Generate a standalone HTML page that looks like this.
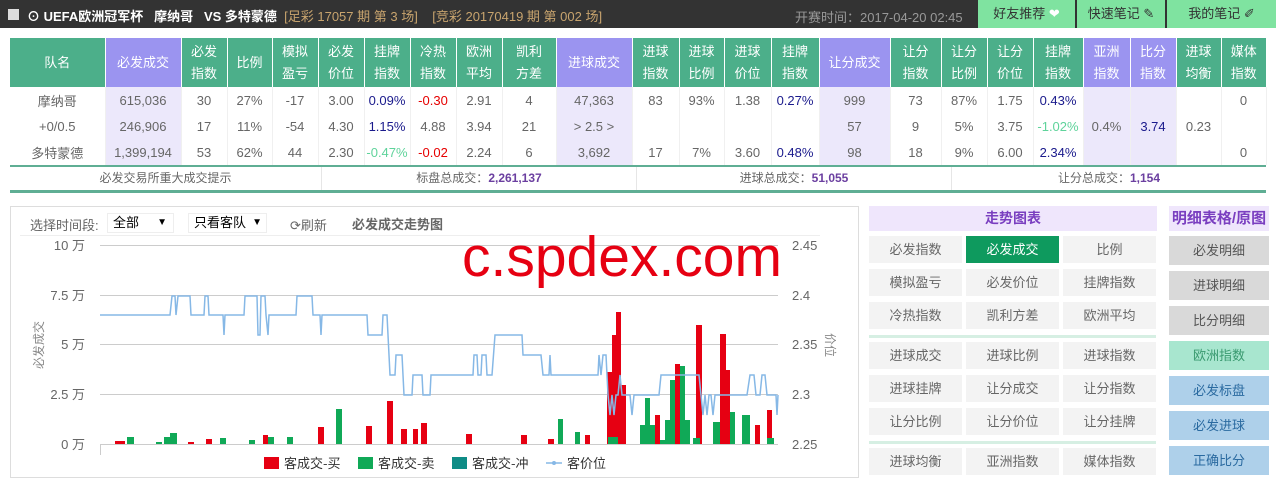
<!DOCTYPE html>
<html><head><meta charset="utf-8"><style>
*{margin:0;padding:0;box-sizing:border-box}
body{width:1276px;height:482px;background:#fff;font-family:"Liberation Sans","Noto Sans CJK SC",sans-serif;font-size:13px;color:#666;position:relative;overflow:hidden}
.abs{position:absolute}
#top{left:0;top:0;width:1276px;height:28px;background:#333}
#top .t{left:27px;top:6px;color:#fff;font-weight:bold;font-size:13px;white-space:nowrap}
#top .t span{color:#c8a46e;font-weight:normal}
.tb{top:0;height:28px;background:#7fe3a0;color:#333;text-align:center;line-height:28px;font-size:13px}
table{border-collapse:collapse;table-layout:fixed}
#tbl{position:absolute;left:10px;top:38px;width:1256px}
#tbl th{background:#4caf8a;color:#fff;font-weight:normal;height:49px;border-right:1px solid #fff;line-height:22px;font-size:13px}
#tbl th.p{background:#9b94f0}
#tbl td{height:26px;text-align:center;border-right:1px solid #f0f0f0;font-size:13px;color:#666}
#tbl td.p{background:#ece8fb}
.b{color:#1a1a8c!important}.r{color:#e60000!important}.g{color:#5fd39b!important}
#sum{left:10px;top:165px;width:1256px;height:28px;border-top:2px solid #5fae94;border-bottom:3px solid #5fae94}
#sum div{position:absolute;top:0;height:23px;line-height:23px;text-align:center;border-right:1px solid #e6e6e6;font-size:12px}
#sum b{color:#6b3fa0}
#chart{left:10px;top:206px;width:849px;height:272px;border:1px solid #ddd}
.hd{background:#efe6fc;color:#7a3fc0;font-weight:bold;text-align:center;font-size:14px}
.bt{position:absolute;width:93px;height:27px;background:#f3f3f3;color:#666;text-align:center;line-height:27px;font-size:13px}
.rb{position:absolute;left:1169px;width:100px;height:29px;text-align:center;line-height:29px;font-size:13px}
.sep{position:absolute;left:869px;width:287px;height:3px;background:#d6efe3}
</style></head><body>
<div id="top" class="abs">
<div class="abs" style="left:8px;top:9px;width:11px;height:11px;background:#ddd"></div>
<div class="abs t">⊙ UEFA欧洲冠军杯&nbsp;&nbsp; 摩纳哥&nbsp;&nbsp; VS 多特蒙德&nbsp; <span>[足彩 17057 期 第 3 场]&nbsp;&nbsp;&nbsp; [竞彩 20170419 期 第 002 场]</span></div>
<div class="abs" style="left:795px;top:7px;color:#999;font-size:13px">开赛时间：2017-04-20 02:45</div>
</div>
<div class="abs tb" style="left:978px;width:97px">好友推荐 <span style="color:#fff">❤</span></div>
<div class="abs tb" style="left:1077px;width:88px">快速笔记 ✎</div>
<div class="abs tb" style="left:1167px;width:109px">我的笔记 ✐</div>

<table id="tbl">
<colgroup><col style="width:95px"><col style="width:76px"><col style="width:46px"><col style="width:45px"><col style="width:46px"><col style="width:46px"><col style="width:46px"><col style="width:46px"><col style="width:46px"><col style="width:54px"><col style="width:76px"><col style="width:47px"><col style="width:45px"><col style="width:47px"><col style="width:48px"><col style="width:71px"><col style="width:51px"><col style="width:46px"><col style="width:46px"><col style="width:50px"><col style="width:47px"><col style="width:46px"><col style="width:45px"><col style="width:45px"></colgroup>
<tr><th>队名</th><th class="p">必发成交</th><th>必发<br>指数</th><th>比例</th><th>模拟<br>盈亏</th><th>必发<br>价位</th><th>挂牌<br>指数</th><th>冷热<br>指数</th><th>欧洲<br>平均</th><th>凯利<br>方差</th><th class="p">进球成交</th><th>进球<br>指数</th><th>进球<br>比例</th><th>进球<br>价位</th><th>挂牌<br>指数</th><th class="p">让分成交</th><th>让分<br>指数</th><th>让分<br>比例</th><th>让分<br>价位</th><th>挂牌<br>指数</th><th class="p">亚洲<br>指数</th><th class="p">比分<br>指数</th><th>进球<br>均衡</th><th style="border-right:0">媒体<br>指数</th></tr>
<tr><td>摩纳哥</td><td class="p">615,036</td><td>30</td><td>27%</td><td>-17</td><td>3.00</td><td class="b">0.09%</td><td class="r">-0.30</td><td>2.91</td><td>4</td><td class="p">47,363</td><td>83</td><td>93%</td><td>1.38</td><td class="b">0.27%</td><td class="p">999</td><td>73</td><td>87%</td><td>1.75</td><td class="b">0.43%</td><td class="p"></td><td class="p"></td><td></td><td>0</td></tr>
<tr><td>+0/0.5</td><td class="p">246,906</td><td>17</td><td>11%</td><td>-54</td><td>4.30</td><td class="b">1.15%</td><td>4.88</td><td>3.94</td><td>21</td><td class="p">&gt; 2.5 &gt;</td><td></td><td></td><td></td><td></td><td class="p">57</td><td>9</td><td>5%</td><td>3.75</td><td class="g">-1.02%</td><td class="p">0.4%</td><td class="p b">3.74</td><td>0.23</td><td></td></tr>
<tr><td>多特蒙德</td><td class="p">1,399,194</td><td>53</td><td>62%</td><td>44</td><td>2.30</td><td class="g">-0.47%</td><td class="r">-0.02</td><td>2.24</td><td>6</td><td class="p">3,692</td><td>17</td><td>7%</td><td>3.60</td><td class="b">0.48%</td><td class="p">98</td><td>18</td><td>9%</td><td>6.00</td><td class="b">2.34%</td><td class="p"></td><td class="p"></td><td></td><td>0</td></tr>
</table>
<div id="sum" class="abs">
<div style="left:0;width:312px">必发交易所重大成交提示</div>
<div style="left:312px;width:315px">标盘总成交：<b>2,261,137</b></div>
<div style="left:627px;width:315px">进球总成交：<b>51,055</b></div>
<div style="left:942px;width:314px;border-right:0">让分总成交：<b>1,154</b></div>
</div>

<div id="chart" class="abs"></div>
<div class="abs" style="left:30px;top:215px;font-size:13px;color:#666">选择时间段:</div>
<div class="abs" style="left:107px;top:213px;width:67px;height:20px;border:1px solid #eee;color:#000;font-size:13px;line-height:18px;padding-left:5px">全部<span style="position:absolute;right:6px;font-size:10px">▼</span></div>
<div class="abs" style="left:188px;top:213px;width:79px;height:20px;border:1px solid #eee;color:#000;font-size:13px;line-height:18px;padding-left:5px">只看客队<span style="position:absolute;right:4px;font-size:10px">▼</span></div>
<div class="abs" style="left:290px;top:215px;color:#666;font-size:13px">⟳刷新</div>
<div class="abs" style="left:352px;top:214px;color:#666;font-size:13px;font-weight:bold">必发成交走势图</div>
<div class="abs" style="left:20px;top:235px;width:800px;height:1px;background:#eee"></div>

<svg class="abs" style="left:0;top:0" width="860" height="482">
<g stroke="#ccc" stroke-width="1">
<line x1="100" y1="245.5" x2="778" y2="245.5"/><line x1="100" y1="295.5" x2="778" y2="295.5"/><line x1="100" y1="344.5" x2="778" y2="344.5"/><line x1="100" y1="394.5" x2="778" y2="394.5"/><line x1="100" y1="444.5" x2="778" y2="444.5"/><line x1="100.5" y1="444" x2="100.5" y2="455"/>
</g>
<g font-size="13" fill="#666" font-family="Liberation Sans,Noto Sans CJK SC,sans-serif" text-anchor="end">
<text x="85" y="250">10 万</text><text x="85" y="300">7.5 万</text><text x="85" y="349">5 万</text><text x="85" y="399">2.5 万</text><text x="85" y="449">0 万</text>
</g>
<g font-size="13" fill="#666" font-family="Liberation Sans,sans-serif">
<text x="792" y="250">2.45</text><text x="792" y="300">2.4</text><text x="792" y="349">2.35</text><text x="792" y="399">2.3</text><text x="792" y="449">2.25</text>
</g>
<text transform="translate(43,345) rotate(-90)" text-anchor="middle" font-size="12" fill="#888" font-family="Noto Sans CJK SC,sans-serif">必发成交</text>
<text transform="translate(826,345) rotate(90)" text-anchor="middle" font-size="12" fill="#888" font-family="Noto Sans CJK SC,sans-serif">价位</text>
<g fill="#e60012">
<rect x="115" y="441" width="10" height="3"/><rect x="188" y="442" width="6" height="2"/><rect x="206" y="439" width="6" height="5"/><rect x="263" y="435" width="5" height="9"/><rect x="318" y="427" width="6" height="17"/><rect x="366" y="426" width="6" height="18"/><rect x="387" y="401" width="6" height="43"/><rect x="401" y="429" width="6" height="15"/><rect x="413" y="429" width="5" height="15"/><rect x="421" y="423" width="6" height="21"/>
<rect x="466" y="434" width="6" height="10"/><rect x="521" y="435" width="6" height="9"/><rect x="548" y="439" width="6" height="5"/><rect x="585" y="435" width="5" height="9"/><rect x="607" y="372" width="5" height="72"/><rect x="612" y="335" width="4" height="109"/><rect x="616" y="312" width="5" height="132"/><rect x="621" y="385" width="5" height="59"/><rect x="655" y="415" width="5" height="29"/><rect x="675" y="364" width="5" height="80"/><rect x="696" y="325" width="6" height="119"/><rect x="720" y="334" width="6" height="110"/><rect x="726" y="370" width="4" height="74"/><rect x="755" y="425" width="5" height="19"/><rect x="767" y="410" width="5" height="34"/>
</g>
<g fill="#10a957">
<rect x="127" y="437" width="7" height="7"/><rect x="156" y="442" width="6" height="2"/><rect x="164" y="437" width="6" height="7"/><rect x="170" y="433" width="7" height="11"/><rect x="220" y="438" width="6" height="6"/><rect x="249" y="440" width="6" height="4"/><rect x="268" y="437" width="6" height="7"/><rect x="287" y="437" width="6" height="7"/><rect x="336" y="409" width="6" height="35"/>
<rect x="558" y="419" width="5" height="25"/><rect x="575" y="432" width="5" height="12"/><rect x="608" y="437" width="10" height="7"/><rect x="640" y="425" width="5" height="19"/><rect x="645" y="398" width="5" height="46"/><rect x="650" y="425" width="5" height="19"/><rect x="660" y="440" width="5" height="4"/><rect x="665" y="420" width="5" height="24"/><rect x="670" y="380" width="5" height="64"/><rect x="680" y="366" width="5" height="78"/><rect x="685" y="420" width="5" height="24"/><rect x="693" y="438" width="7" height="6"/><rect x="713" y="422" width="7" height="22"/><rect x="730" y="412" width="5" height="32"/><rect x="742" y="415" width="8" height="29"/><rect x="767" y="438" width="7" height="6"/>
</g>
<polyline fill="none" stroke="#86b8e6" stroke-width="1.5" points="100,315 170,315 172,296 175,296 176,315 178,296 190,296 191,315 204,315 205,296 208,296 209,315 223,315 224,335 225,315 244,315 245,296 257,296 258,335 260,335 261,296 265,296 266,315 268,335 269,315 296,315 297,296 312,296 313,315 320,315 321,335 322,315 367,315 368,335 382,335 383,315 387,315 390,375 395,375 396,355 402,355 404,395 412,395 413,375 422,375 423,395 430,395 431,375 473,375 474,355 477,355 478,375 481,375 482,355 486,355 487,375 492,375 495,335 522,335 523,355 541,355 543,375 549,375 550,355 551,375 598,375 599,355 601,375 603,355 606,355 608,395 610,415 612,395 614,415 616,395 618,395 620,375 622,395 630,395 632,415 634,395 659,395 661,375 699,375 701,395 703,415 705,395 707,415 709,395 711,395 713,415 715,395 747,395 750,375 754,375 756,395 760,395 762,375 765,375 767,395 776,395 777,415 778,395"/>
<text x="462" y="276" font-size="57" fill="#e60012" font-family="Liberation Sans,sans-serif">c.spdex.com</text>
<g font-size="13" fill="#333" font-family="Noto Sans CJK SC,sans-serif">
<rect x="264" y="457" width="15" height="12" fill="#e60012"/><text x="284" y="468">客成交-买</text>
<rect x="358" y="457" width="15" height="12" fill="#10a957"/><text x="378" y="468">客成交-卖</text>
<rect x="452" y="457" width="15" height="12" fill="#0f8c86"/><text x="472" y="468">客成交-冲</text>
<line x1="546" y1="463" x2="562" y2="463" stroke="#86b8e6" stroke-width="1.5"/><circle cx="554" cy="463" r="2" fill="#86b8e6"/><text x="567" y="468">客价位</text>
</g>
</svg>

<div class="abs hd" style="left:869px;top:206px;width:288px;height:25px;line-height:25px">走势图表</div>
<div class="bt" style="left:869px;top:236px">必发指数</div><div class="bt" style="left:966px;top:236px;background:#0e9a5e;color:#fff">必发成交</div><div class="bt" style="left:1063px;top:236px">比例</div>
<div class="bt" style="left:869px;top:269px">模拟盈亏</div><div class="bt" style="left:966px;top:269px">必发价位</div><div class="bt" style="left:1063px;top:269px">挂牌指数</div>
<div class="bt" style="left:869px;top:302px">冷热指数</div><div class="bt" style="left:966px;top:302px">凯利方差</div><div class="bt" style="left:1063px;top:302px">欧洲平均</div>
<div class="sep" style="top:335px"></div>
<div class="bt" style="left:869px;top:342px">进球成交</div><div class="bt" style="left:966px;top:342px">进球比例</div><div class="bt" style="left:1063px;top:342px">进球指数</div>
<div class="bt" style="left:869px;top:375px">进球挂牌</div><div class="bt" style="left:966px;top:375px">让分成交</div><div class="bt" style="left:1063px;top:375px">让分指数</div>
<div class="bt" style="left:869px;top:408px">让分比例</div><div class="bt" style="left:966px;top:408px">让分价位</div><div class="bt" style="left:1063px;top:408px">让分挂牌</div>
<div class="sep" style="top:441px"></div>
<div class="bt" style="left:869px;top:448px">进球均衡</div><div class="bt" style="left:966px;top:448px">亚洲指数</div><div class="bt" style="left:1063px;top:448px">媒体指数</div>

<div class="abs hd" style="left:1169px;top:206px;width:100px;height:25px;line-height:25px;font-size:15px">明细表格/原图</div>
<div class="rb" style="top:236px;background:#d9d9d9;color:#555">必发明细</div>
<div class="rb" style="top:271px;background:#d9d9d9;color:#555">进球明细</div>
<div class="rb" style="top:306px;background:#d9d9d9;color:#555">比分明细</div>
<div class="rb" style="top:341px;background:#a8e6cf;color:#3a9a70">欧洲指数</div>
<div class="rb" style="top:376px;background:#aed0ea;color:#2a6aa0">必发标盘</div>
<div class="rb" style="top:411px;background:#aed0ea;color:#2a6aa0">必发进球</div>
<div class="rb" style="top:446px;background:#aed0ea;color:#2a6aa0">正确比分</div>
</body></html>
